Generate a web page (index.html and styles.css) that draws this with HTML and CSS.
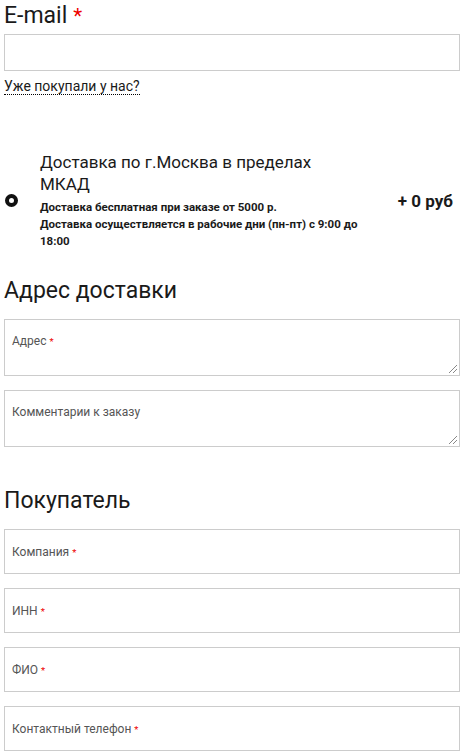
FILE: index.html
```html
<!DOCTYPE html>
<html lang="ru">
<head>
    <meta charset="UTF-8">
    <meta name="viewport" content="width=device-width, initial-scale=1.0">
    <title>Оформление заказа</title>
    <link rel="stylesheet" href="styles.css">
</head>
<body>
    <div class="checkout">
        <div class="section">
            <h2 class="email-title">E-mail<span class="req">*</span></h2>
            <input type="text" class="email-input">
            <a href="#" class="login-link">Уже покупали у нас?</a>
        </div>

        <div class="delivery">
            <span class="radio"></span>
            <div class="delivery-info">
                <div class="delivery-name">Доставка по г.Москва в пределах МКАД</div>
                <div class="delivery-desc">Доставка бесплатная при заказе от 5000 р.<br>Доставка осуществляется в рабочие дни (пн-пт) с 9:00 до 18:00</div>
            </div>
            <div class="delivery-price">+ 0 руб</div>
        </div>

        <div class="section">
            <h2>Адрес доставки</h2>
            <div class="field area">
                <label>Адрес <span class="req">*</span></label>
                <span class="grip"></span>
            </div>
            <div class="field area">
                <label>Комментарии к заказу</label>
                <span class="grip"></span>
            </div>
        </div>

        <div class="section">
            <h2>Покупатель</h2>
            <div class="field"><label>Компания <span class="req">*</span></label></div>
            <div class="field"><label>ИНН <span class="req">*</span></label></div>
            <div class="field"><label>ФИО <span class="req">*</span></label></div>
            <div class="field"><label>Контактный телефон <span class="req">*</span></label></div>
        </div>
    </div>
</body>
</html>
```

FILE: styles.css
```css
body {
    font-family: Roboto, "Noto Sans", sans-serif;
    margin: 0;
    padding: 0 5px 0 4px;
    background: #fff;
    color: #1a1a1a;
}
h2 {
    font-size: 23px;
    font-weight: 400;
    margin: 0 0 12px 0;
    line-height: 32px;
}
.email-title {
    margin: 0 0 2px 0;
}
.req {
    color: #e00;
    font-size: 0.8em;
}
h2 .req {
    font-size: 0.9em;
    margin-left: 6px;
}
.email-input {
    display: block;
    box-sizing: border-box;
    width: 100%;
    height: 37px;
    border: 1px solid #ccc;
    margin: 0 0 5px 0;
    padding: 0 8px;
}
.login-link {
    color: #1a1a1a;
    text-decoration: none;
    font-size: 14px;
    border-bottom: 1px dotted #000;
}
.delivery {
    display: flex;
    align-items: center;
    margin: 56px 0 25px 0;
}
.radio {
    box-sizing: border-box;
    width: 13px;
    height: 13px;
    border: 4px solid #111;
    border-radius: 50%;
    margin: 0 22px 0 1px;
    flex-shrink: 0;
}
.delivery-info {
    flex: 1;
}
.delivery-name {
    font-size: 17px;
    line-height: 22px;
    margin-bottom: 4px;
}
.delivery-desc {
    font-size: 11.5px;
    font-weight: 700;
    line-height: 17px;
}
.delivery-price {
    font-size: 17px;
    font-weight: 700;
    margin-left: 37px;
    padding-right: 7px;
}
.section {
    margin-bottom: 38px;
}
.field {
    position: relative;
    box-sizing: border-box;
    height: 45px;
    border: 1px solid #ccc;
    margin-bottom: 14px;
    padding: 11px 0 0 7px;
}
.field.area {
    height: 57px;
    padding-top: 10px;
}
.field label {
    font-size: 12px;
    color: #555;
}
.grip {
    position: absolute;
    right: 2px;
    bottom: 2px;
    width: 8px;
    height: 8px;
    background: linear-gradient(135deg, transparent 45%, #888 45%, #888 52%, transparent 52%, transparent 70%, #888 70%, #888 77%, transparent 77%);
}
```
